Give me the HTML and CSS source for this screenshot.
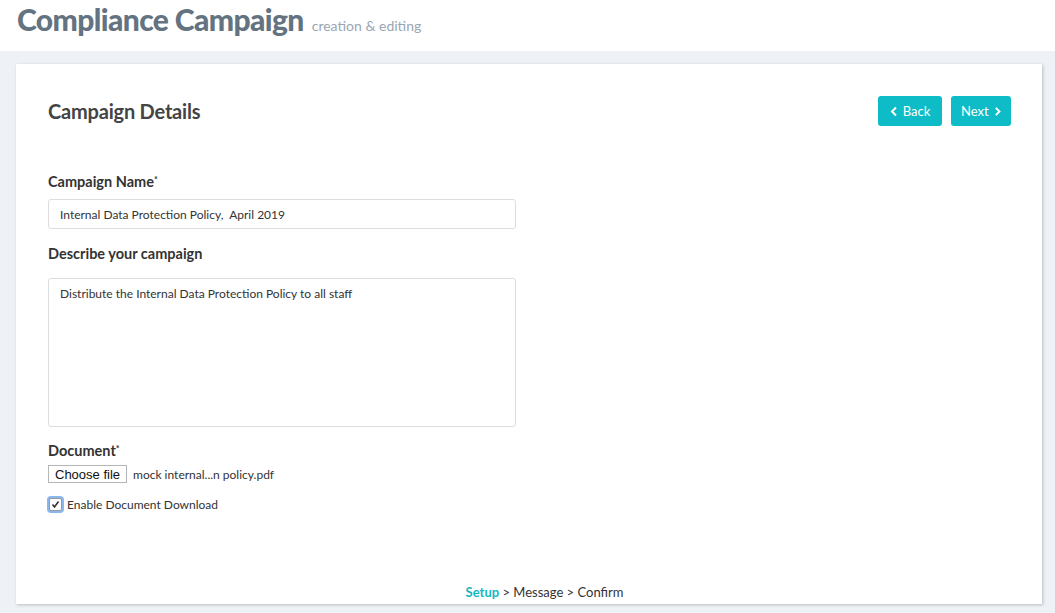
FILE: index.html
```html
<!DOCTYPE html>
<html>
<head>
<meta charset="utf-8">
<link rel="stylesheet" href="styles.css">
</head>
<body>
<header class="topbar">
  <h1 class="title">Compliance Campaign</h1>
  <span class="subtitle">creation &amp; editing</span>
</header>
<main class="page">
  <section class="card">
    <div class="card-head">
      <h2 class="card-title">Campaign Details</h2>
      <div class="actions">
        <button class="btn"><svg class="chev" width="8" height="11" viewBox="0 0 8 11"><polyline points="6,1.5 2,5.5 6,9.5" fill="none" stroke="#fff" stroke-width="2"/></svg>Back</button>
        <button class="btn">Next<svg class="chev right" width="8" height="11" viewBox="0 0 8 11"><polyline points="2,1.5 6,5.5 2,9.5" fill="none" stroke="#fff" stroke-width="2"/></svg></button>
      </div>
    </div>
    <form class="form">
      <label class="label">Campaign Name<sup class="req">*</sup></label>
      <div class="input">Internal Data Protection Policy,&nbsp; April 2019</div>
      <label class="label gap">Describe your campaign</label>
      <div class="textarea">Distribute the Internal Data Protection Policy to all staff</div>
      <label class="label doc">Document<sup class="req">*</sup></label>
      <div class="file-row">
        <span class="file-btn">Choose file</span>
        <span class="file-name">mock internal...n policy.pdf</span>
      </div>
      <div class="check-row">
        <span class="checkbox"><svg width="9" height="9" viewBox="0 0 9 9"><polyline points="1.5,4.5 3.5,7 7.5,1.5" fill="none" stroke="#333" stroke-width="1.6"/></svg></span>
        <span class="check-label">Enable Document Download</span>
      </div>
    </form>
    <div class="steps"><span class="active">Setup</span> &gt; Message &gt; Confirm</div>
  </section>
</main>
</body>
</html>
```
FILE: styles.css
```css
html, body {
  margin: 0;
  padding: 0;
}
body {
  font-family: Lato, "Noto Sans", sans-serif;
  background: #eef2f6;
  color: #333;
  width: 1055px;
  height: 613px;
  overflow: hidden;
}
.topbar {
  background: #fff;
  height: 51px;
  display: flex;
  align-items: baseline;
  padding-left: 17px;
  box-sizing: border-box;
}
.title {
  margin: 0;
  font-size: 30px;
  font-weight: 900;
  color: #637381;
  line-height: 38px;
  letter-spacing: -0.6px;
}
.subtitle {
  margin-left: 8px;
  font-size: 14px;
  color: #9aa6b2;
}
.page {
  padding: 13px 13px 0 16px;
}
.card {
  background: #fff;
  width: 1026px;
  height: 540px;
  box-shadow: 1px 1px 3px rgba(0,0,0,0.22);
  display: flex;
  flex-direction: column;
  padding: 32px 31px 0 32px;
  box-sizing: border-box;
}
.card-head {
  display: flex;
  justify-content: space-between;
  align-items: center;
}
.card-title {
  margin: 0;
  font-size: 20px;
  font-weight: 700;
  color: #444;
  letter-spacing: -0.2px;
}
.actions {
  display: flex;
  gap: 9px;
}
.btn {
  background: #0dbcc6;
  color: #fff;
  border: none;
  border-radius: 3px;
  height: 30px;
  padding: 0 10px;
  font-family: inherit;
  font-size: 13px;
  display: flex;
  align-items: center;
  gap: 5px;
}
.btn:first-child { width: 64px; justify-content: center; }
.btn:last-child { width: 60px; justify-content: center; }
.form {
  display: flex;
  flex-direction: column;
  align-items: flex-start;
  margin-top: 47px;
}
.label {
  font-size: 14.5px;
  font-weight: 700;
  color: #333;
  line-height: 18px;
}
.req {
  font-size: 9px;
  vertical-align: top;
  position: relative;
  top: -2px;
}
.input {
  margin-top: 8px;
  width: 468px;
  height: 30px;
  border: 1px solid #ddd;
  border-radius: 3px;
  box-sizing: border-box;
  font-size: 12px;
  color: #333;
  padding-left: 11px;
  display: flex;
  align-items: center;
}
.label.gap {
  margin-top: 16px;
}
.textarea {
  margin-top: 15px;
  width: 468px;
  height: 149px;
  border: 1px solid #ddd;
  border-radius: 3px;
  box-sizing: border-box;
  font-size: 12px;
  padding: 7px 11px;
}
.label.doc {
  margin-top: 15px;
}
.file-row {
  margin-top: 5px;
  display: flex;
  align-items: center;
  gap: 6px;
}
.file-btn {
  font-family: "Liberation Sans", Arial, sans-serif;
  font-size: 13px;
  border: 1px solid #b5b5b5;
  background: #fff;
  padding: 1px 6px;
  height: 18px;
  box-sizing: border-box;
  display: flex;
  align-items: center;
  color: #111;
}
.file-name {
  font-size: 12px;
  color: #333;
}
.check-row {
  margin-top: 14px;
  display: flex;
  align-items: center;
  gap: 5px;
}
.checkbox {
  width: 11px;
  height: 11px;
  border: 1px solid #999;
  border-radius: 2px;
  background: #fff;
  box-shadow: 0 0 0 2px #8ab8ee;
  display: flex;
  align-items: center;
  justify-content: center;
  margin-left: 1px;
}
.check-label {
  font-size: 12px;
  color: #333;
}
.steps {
  margin-top: auto;
  margin-bottom: 4px;
  text-align: center;
  font-size: 13px;
  color: #333;
  padding-left: 30px;
}
.steps .active {
  color: #14b6c2;
  font-weight: 700;
}
```
